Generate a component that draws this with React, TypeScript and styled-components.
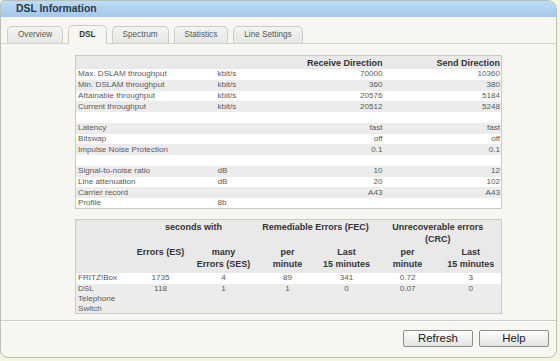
import styled, { createGlobalStyle } from "styled-components";

const GlobalStyle = createGlobalStyle`
  html, body {
    margin: 0;
    padding: 0;
    background: #f6f6e0;
  }
  body {
    font-family: "Liberation Sans", Arial, sans-serif;
  }
`;

const Panel = styled.div`
  width: 555px;
  height: 356px;
  border: 1px solid #b7c1b6;
  border-radius: 4px 9px 8px 8px;
  background: #f7f6f1;
  display: flex;
  flex-direction: column;
  overflow: hidden;
`;

const TitleBar = styled.div`
  height: 16px;
  line-height: 16px;
  padding-left: 15px;
  background: linear-gradient(#bddbf5, #a2c8ea);
  color: #2b3948;
  font-size: 10.4px;
  font-weight: bold;
`;

const TabRow = styled.div`
  display: flex;
  align-items: flex-end;
  gap: 5px;
  height: 18px;
  margin-top: 8px;
  padding-left: 6px;
  border-bottom: 1px solid #d2d2d0;
`;

const Tab = styled.div<{ $active?: boolean }>`
  height: ${(p) => (p.$active ? "18px" : "16px")};
  line-height: ${(p) => (p.$active ? "17px" : "16px")};
  margin-bottom: ${(p) => (p.$active ? "-1px" : "0")};
  padding: 0 10px;
  border: 1px solid #cbcbc9;
  border-bottom: none;
  border-radius: 5px 5px 0 0;
  background: ${(p) =>
    p.$active ? "#f7f6f1" : "linear-gradient(#f4f4f3, #e6e6e5)"};
  color: ${(p) => (p.$active ? "#333" : "#555")};
  font-size: 8.2px;
  font-weight: ${(p) => (p.$active ? "bold" : "normal")};
`;

const Content = styled.div`
  flex: 1;
  padding: 11px 0 0 74px;
`;

const Table = styled.table<{ $gap?: number }>`
  width: 426px;
  margin-top: ${(p) => p.$gap ?? 0}px;
  border: 1px solid #cbcbcb;
  border-collapse: collapse;
  table-layout: fixed;
  color: #5a5a5a;
  font-size: 8.1px;
`;

const HeadCell = styled.th<{ $align?: string }>`
  height: 13px;
  padding: 0 2px;
  background: #e9e9e9;
  color: #333;
  font-size: 9px;
  font-weight: bold;
  text-align: ${(p) => p.$align ?? "right"};
  white-space: nowrap;
`;

const InfoRow = styled.tr`
  height: 10.75px;
  background: #fff;
  &:nth-child(even) {
    background: #ececec;
  }
`;

const Cell = styled.td<{ $align?: string; $pad?: string }>`
  padding: ${(p) => p.$pad ?? "0 2px"};
  line-height: 10px;
  text-align: ${(p) => p.$align ?? "left"};
  white-space: nowrap;
`;

const ErrHead = styled.th<{ $bottom?: number }>`
  padding: 1px 2px ${(p) => p.$bottom ?? 0}px;
  background: #e9e9e9;
  color: #333;
  font-size: 9px;
  font-weight: bold;
  line-height: 12px;
  text-align: center;
  vertical-align: top;
`;

const ErrRow = styled.tr<{ $shade?: boolean }>`
  background: ${(p) => (p.$shade ? "#ececec" : "#fff")};
`;

const ErrCell = styled.td<{ $label?: boolean }>`
  padding: 0 2px;
  line-height: ${(p) => (p.$label ? "9.9px" : "10.5px")};
  height: 10.5px;
  text-align: ${(p) => (p.$label ? "left" : "center")};
  vertical-align: top;
`;

const Footer = styled.div`
  height: 37px;
  border-top: 1px solid #cfd1c9;
  box-shadow: inset 0 1px #fff;
  display: flex;
  justify-content: flex-end;
  align-items: flex-start;
  gap: 6px;
  padding: 9px 7px 0 0;
  box-sizing: border-box;
`;

const Button = styled.button`
  width: 70px;
  height: 17px;
  padding: 0;
  border: 1px solid #8d8d8d;
  border-radius: 2px;
  background: linear-gradient(#fefefe, #e2e2e2);
  color: #1a1a1a;
  font-family: "Liberation Sans", Arial, sans-serif;
  font-size: 11.4px;
  line-height: 15px;
`;

const tabs = ["Overview", "DSL", "Spectrum", "Statistics", "Line Settings"];

const info: [string, string, string, string][] = [
  ["Max. DSLAM throughput", "kbit/s", "70000", "10360"],
  ["Min. DSLAM throughput", "kbit/s", "360", "380"],
  ["Attainable throughput", "kbit/s", "20576", "5184"],
  ["Current throughput", "kbit/s", "20512", "5248"],
  ["", "", "", ""],
  ["Latency", "", "fast", "fast"],
  ["Bitswap", "", "off", "off"],
  ["Impulse Noise Protection", "", "0.1", "0.1"],
  ["", "", "", ""],
  ["Signal-to-noise ratio", "dB", "10", "12"],
  ["Line attenuation", "dB", "20", "102"],
  ["Carrier record", "", "A43", "A43"],
  ["Profile", "8b", "", ""],
];

const errors = [
  { label: ["FRITZ!Box"], values: ["1735", "4", "89", "341", "0.72", "3"] },
  { label: ["DSL", "Telephone", "Switch"], values: ["118", "1", "1", "0", "0.07", "0"] },
];

const lines = (parts: string[]) =>
  parts.map((p, i) => (
    <span key={i}>
      {i > 0 && <br />}
      {p}
    </span>
  ));

export default function App() {
  return (
    <>
      <GlobalStyle />
      <Panel>
        <TitleBar>DSL Information</TitleBar>
        <TabRow>
          {tabs.map((t) => (
            <Tab key={t} $active={t === "DSL"}>
              {t}
            </Tab>
          ))}
        </TabRow>
        <Content>
          <Table>
            <colgroup>
              <col style={{ width: 140 }} />
              <col style={{ width: 82 }} />
              <col style={{ width: 87 }} />
              <col style={{ width: 117 }} />
            </colgroup>
            <thead>
              <tr>
                <HeadCell />
                <HeadCell />
                <HeadCell>Receive Direction</HeadCell>
                <HeadCell style={{ paddingRight: 1 }}>Send Direction</HeadCell>
              </tr>
            </thead>
            <tbody>
              {info.map(([label, unit, rx, tx], i) => (
                <InfoRow key={i}>
                  <Cell>{label}</Cell>
                  <Cell>{unit}</Cell>
                  <Cell $align="right">{rx}</Cell>
                  <Cell $align="right" $pad="0 1px 0 0">
                    {tx}
                  </Cell>
                </InfoRow>
              ))}
            </tbody>
          </Table>

          <Table $gap={10}>
            <colgroup>
              <col style={{ width: 55 }} />
              <col style={{ width: 60 }} />
              <col style={{ width: 66 }} />
              <col style={{ width: 62 }} />
              <col style={{ width: 56 }} />
              <col style={{ width: 66 }} />
              <col style={{ width: 61 }} />
            </colgroup>
            <thead>
              <tr>
                <ErrHead />
                <ErrHead colSpan={2}>seconds with</ErrHead>
                <ErrHead colSpan={2}>Remediable Errors (FEC)</ErrHead>
                <ErrHead colSpan={2}>{lines(["Unrecoverable errors", "(CRC)"])}</ErrHead>
              </tr>
              <tr>
                <ErrHead $bottom={3} />
                <ErrHead $bottom={3}>Errors (ES)</ErrHead>
                <ErrHead $bottom={3}>{lines(["many", "Errors (SES)"])}</ErrHead>
                <ErrHead $bottom={3}>{lines(["per", "minute"])}</ErrHead>
                <ErrHead $bottom={3}>{lines(["Last", "15 minutes"])}</ErrHead>
                <ErrHead $bottom={3}>{lines(["per", "minute"])}</ErrHead>
                <ErrHead $bottom={3}>{lines(["Last", "15 minutes"])}</ErrHead>
              </tr>
            </thead>
            <tbody>
              {errors.map((row, i) => (
                <ErrRow key={i} $shade={i % 2 === 1}>
                  <ErrCell $label>{lines(row.label)}</ErrCell>
                  {row.values.map((v, j) => (
                    <ErrCell key={j}>{v}</ErrCell>
                  ))}
                </ErrRow>
              ))}
            </tbody>
          </Table>
        </Content>
        <Footer>
          <Button>Refresh</Button>
          <Button>Help</Button>
        </Footer>
      </Panel>
    </>
  );
}
